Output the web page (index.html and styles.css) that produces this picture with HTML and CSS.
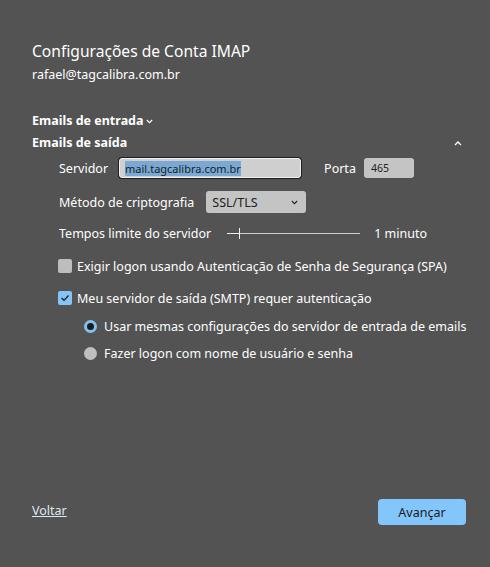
FILE: index.html
```html
<!DOCTYPE html>
<html lang="pt">
<head>
<meta charset="utf-8">
<link rel="stylesheet" href="styles.css">
</head>
<body>
<div class="page">
  <div class="content">
    <h1 class="title">Configurações de Conta IMAP</h1>
    <div class="account">rafael@tagcalibra.com.br</div>

    <div class="section-head collapsed">
      <span>Emails de entrada</span>
      <svg class="chev" width="7" height="5" viewBox="0 0 7 5"><path d="M0.8 1 L3.5 3.7 L6.2 1" fill="none" stroke="#fff" stroke-width="1.1"/></svg>
    </div>
    <div class="section-head open">
      <span>Emails de saída</span>
      <svg class="chev-up" width="8" height="5" viewBox="0 0 8 5"><path d="M1 4 L4 1 L7 4" fill="none" stroke="#fff" stroke-width="1.3"/></svg>
    </div>

    <div class="fields">
      <div class="row">
        <span class="label">Servidor</span>
        <div class="input server"><span class="sel">mail.tagcalibra.com.br</span></div>
        <span class="label porta">Porta</span>
        <div class="input port">465</div>
      </div>
      <div class="row">
        <span class="label">Método de criptografia</span>
        <div class="select">
          <span>SSL/TLS</span>
          <svg width="7" height="5" viewBox="0 0 7 5"><path d="M0.8 1 L3.5 3.7 L6.2 1" fill="none" stroke="#222" stroke-width="1.1"/></svg>
        </div>
      </div>
      <div class="row">
        <span class="label">Tempos limite do servidor</span>
        <div class="slider"><span class="fill"></span><span class="thumb"></span><span class="track"></span></div>
        <span class="label">1 minuto</span>
      </div>
      <div class="row check">
        <span class="box"></span>
        <span class="label">Exigir logon usando Autenticação de Senha de Segurança (SPA)</span>
      </div>
      <div class="row check">
        <span class="box checked"><svg width="10" height="8" viewBox="0 0 10 8"><path d="M1.5 4 L4 6.3 L8.5 1.5" fill="none" stroke="#1a1a1a" stroke-width="1.2"/></svg></span>
        <span class="label">Meu servidor de saída (SMTP) requer autenticação</span>
      </div>
      <div class="radios">
        <div class="row radio">
          <span class="dot on"></span>
          <span class="label">Usar mesmas configurações do servidor de entrada de emails</span>
        </div>
        <div class="row radio">
          <span class="dot"></span>
          <span class="label">Fazer logon com nome de usuário e senha</span>
        </div>
      </div>
    </div>
  </div>

  <div class="footer">
    <a class="back" href="#">Voltar</a>
    <button class="next">Avançar</button>
  </div>
</div>
</body>
</html>
```
FILE: styles.css
```css
* { box-sizing: border-box; }
html, body { margin: 0; height: 100%; }
body {
  background: #535353;
  color: #ffffff;
  font-family: "Noto Sans", "Open Sans", sans-serif;
  font-size: 12.5px;
}
.page {
  height: 567px;
  display: flex;
  flex-direction: column;
  padding: 39px 24px 0 32px;
}
.content { flex: 1; }
.title {
  margin: 0;
  font-size: 15.6px;
  font-weight: 400;
  line-height: 24px;
}
.account {
  margin-top: 3px;
  line-height: 18px;
}
.section-head {
  display: flex;
  align-items: center;
  font-weight: 700;
  line-height: 18px;
}
.section-head.collapsed { margin-top: 28px; gap: 2px; }
.section-head.open { margin-top: 4px; justify-content: space-between; padding-right: 4px; }
.fields {
  padding-left: 27px;
  display: flex;
  flex-direction: column;
}
.row {
  display: flex;
  align-items: center;
}
.fields > .row:nth-child(1) { margin-top: 6px; height: 20px; }
.fields > .row:nth-child(2) { margin-top: 13px; height: 22px; }
.fields > .row:nth-child(3) { margin-top: 10px; height: 20px; }
.fields > .row:nth-child(4) { margin-top: 13px; height: 20px; }
.fields > .row:nth-child(5) { margin-top: 12px; height: 20px; }
.label { white-space: nowrap; }
.input {
  height: 20px;
  border-radius: 3px;
  background: #cfcfcf;
  color: #222;
  display: flex;
  align-items: center;
  font-size: 11px;
}
.input.server {
  width: 182px;
  margin-left: 11px;
  border: 1px solid #f2f2f2;
  box-shadow: 0 0 0 1px #1e1e1e;
  padding-left: 5px;
}
.sel {
  background: #79a9d4;
  color: #1d1d1d;
  line-height: 15px;
}
.porta { margin-left: 23px; }
.input.port {
  width: 50px;
  margin-left: 8px;
  background: #c4c4c4;
  padding-left: 7px;
  font-size: 10.5px;
}
.select {
  margin-left: 12px;
  width: 100px;
  height: 22px;
  background: #c4c4c4;
  border-radius: 3px;
  color: #222;
  display: flex;
  align-items: center;
  justify-content: space-between;
  padding: 0 8px 0 6px;
}
.slider {
  width: 133px;
  height: 14px;
  margin-left: 16px;
  margin-right: 14px;
  display: flex;
  align-items: center;
}
.slider .fill { width: 12px; height: 1px; background: #f0f0f0; }
.slider .thumb { width: 1px; height: 11px; background: #f0f0f0; }
.slider .track { flex: 1; height: 1px; background: #cfcfcf; }
.check .box {
  flex-shrink: 0;
  width: 14px;
  height: 14px;
  border-radius: 2px;
  background: #bdbdbd;
  margin-left: -1px;
  margin-right: 5px;
  display: flex;
  align-items: center;
  justify-content: center;
}
.check .box.checked { background: #86c4f5; }
.radios { padding-left: 25px; display: flex; flex-direction: column; }
.radio { height: 20px; }
.radios .radio:first-child { margin-top: 8px; }
.radios .radio:last-child { margin-top: 7px; }
.dot {
  flex-shrink: 0;
  width: 13px;
  height: 13px;
  border-radius: 50%;
  background: #bfbfbf;
  margin-right: 7px;
}
.dot.on {
  background: #1c1c1c;
  border: 3px solid #82c0f0;
}
.footer {
  height: 68px;
  display: flex;
  justify-content: space-between;
  align-items: flex-start;
}
.back {
  margin-top: 3px;
  color: #dfe6ee;
  text-decoration: underline;
  line-height: 18px;
}
.next {
  width: 88px;
  height: 26px;
  border: none;
  border-radius: 4px;
  background: #82c6fb;
  color: #1a1a1a;
  font-family: inherit;
  font-size: 12.5px;
  padding: 0;
}
```
